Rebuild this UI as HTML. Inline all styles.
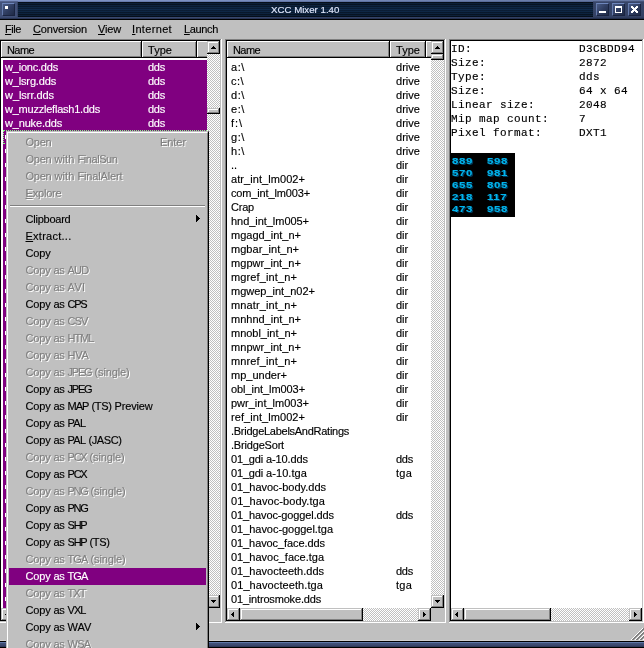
<!DOCTYPE html>
<html><head><meta charset="utf-8"><title>XCC Mixer 1.40</title>
<style>
html,body{margin:0;padding:0;background:#c0c0c0;}
body{width:644px;height:648px;overflow:hidden;position:relative;font-family:"Liberation Sans",sans-serif;font-size:11px;color:#000;-webkit-text-stroke:0.15px;}
#root{position:absolute;left:0;top:0;width:644px;height:648px;overflow:hidden;will-change:transform;}
div,span,i,b{position:absolute;box-sizing:border-box;white-space:nowrap;display:block;font-style:normal;font-weight:normal;}
u{text-decoration:underline;text-underline-offset:1px;}
.t{line-height:14px;height:14px;}
.w{color:#fff;}
.mono{font-family:"Liberation Mono",monospace;font-size:11px;letter-spacing:0.4px;}
.dis{color:#808080;text-shadow:1px 1px 0 #fff;}
.chk{background-color:#c0c0c0;background-image:repeating-conic-gradient(#fff 0% 25%, #c0c0c0 0% 50%);background-size:2px 2px;}
.btn{background:#c0c0c0;box-shadow:inset -1px -1px 0 #000,inset 1px 1px 0 #c0c0c0,inset -2px -2px 0 #808080,inset 2px 2px 0 #fff;}
.hd{background:#c0c0c0;height:17px;top:41px;box-shadow:inset -1px -1px 0 #000,inset 1px 1px 0 #fff,inset -2px -2px 0 #808080;}
.hd span{top:2px;line-height:14px;}
.pan{top:39px;height:584px;background:#fff;box-shadow:inset -1px -1px 0 #fff,inset 1px 1px 0 #808080,inset -2px -2px 0 #c0c0c0,inset 2px 2px 0 #000;}
.tb{top:3px;width:13px;height:13px;background:linear-gradient(135deg,#495b86 0%,#303e62 50%,#1f2a46 100%);border-top:1px solid #6e86bc;border-left:1px solid #647aac;border-right:1px solid #1a2440;border-bottom:1px solid #1a2440;}
.num{line-height:12px;font-size:9.5px;font-weight:bold;color:#00b4ec;letter-spacing:0.55px;text-shadow:1px 1px 0 #003a5c;transform:scaleX(1.2);transform-origin:0 0;}
.ar{background:#000;}
</style></head><body><div id="root">

<div style="left:0;top:0;width:644px;height:20px;background:linear-gradient(#7b90c2 0,#7b90c2 1px,#667bad 1px,#667bad 2px,#43537b 2px,#3f4e75 17px,#39486e 17px,#39486e 18px,#2a3656 18px,#2a3656 19px,#000 19px,#000 20px);"></div>
<div style="left:0;top:1px;width:18px;height:1px;background:#55648f;"></div><div style="left:593px;top:1px;width:51px;height:1px;background:#55648f;"></div>
<div style="left:0;top:0;width:644px;height:19px;background:linear-gradient(to right,rgba(0,8,24,0) 0,rgba(0,8,24,0) 30%,rgba(0,8,24,.2) 100%);"></div>
<div style="left:17px;top:2px;width:577px;height:15px;background:#364262;"></div>
<div style="left:18px;top:2px;width:575px;height:15px;background:linear-gradient(rgba(24,70,125,0) 0,rgba(24,70,125,.32) 50%,rgba(24,70,125,0) 100%),repeating-linear-gradient(#050d18 0,#050d18 1px,#0b1d34 1px,#0b1d34 2px);"></div>
<div class="tb" style="left:2px;"></div><div style="left:5px;top:6px;width:3px;height:3px;background:#fff;"></div>
<div class="t" style="left:271px;top:2.6px;font-size:9.7px;color:#dfe6fb;">XCC Mixer 1.40</div>
<div class="tb" style="left:596px;"></div><div style="left:599px;top:11px;width:7px;height:2px;background:#fff;"></div>
<div class="tb" style="left:612px;"></div><div style="left:615px;top:6px;width:7px;height:7px;border:1px solid #fff;border-top:2px solid #fff;"></div>
<div class="tb" style="left:628px;"></div><svg style="position:absolute;left:631px;top:6px" width="7" height="7" viewBox="0 0 7 7" shape-rendering="crispEdges"><path d="M0 0h1v1h-1zM1 0h1v1h-1zM5 0h1v1h-1zM6 0h1v1h-1zM0 1h1v1h-1zM1 1h1v1h-1zM2 1h1v1h-1zM4 1h1v1h-1zM5 1h1v1h-1zM6 1h1v1h-1zM1 2h1v1h-1zM2 2h1v1h-1zM3 2h1v1h-1zM4 2h1v1h-1zM5 2h1v1h-1zM2 3h1v1h-1zM3 3h1v1h-1zM4 3h1v1h-1zM1 4h1v1h-1zM2 4h1v1h-1zM3 4h1v1h-1zM4 4h1v1h-1zM5 4h1v1h-1zM0 5h1v1h-1zM1 5h1v1h-1zM2 5h1v1h-1zM4 5h1v1h-1zM5 5h1v1h-1zM6 5h1v1h-1zM0 6h1v1h-1zM1 6h1v1h-1zM5 6h1v1h-1zM6 6h1v1h-1z" fill="#fff"/></svg>
<div class="t" style="left:5px;top:22px;letter-spacing:-0.434px;"><u>F</u>ile</div>
<div class="t" style="left:33px;top:22px;letter-spacing:-0.164px;"><u>C</u>onversion</div>
<div class="t" style="left:98px;top:22px;letter-spacing:-0.164px;"><u>V</u>iew</div>
<div class="t" style="left:132px;top:22px;letter-spacing:0.336px;"><u>I</u>nternet</div>
<div class="t" style="left:184px;top:22px;letter-spacing:-0.349px;"><u>L</u>aunch</div>
<div class="pan" style="left:-1px;width:223px;"></div>
<div class="hd" style="left:1px;width:141px;"><span style="left:6px;letter-spacing:-0.586px;">Name</span></div>
<div class="hd" style="left:142px;width:55px;"><span style="left:6px;letter-spacing:0.035px;">Type</span></div>
<div class="hd" style="left:197px;width:12px;"></div>
<div style="left:3px;top:60px;width:204px;height:548px;background:#800080;"></div>
<div class="t w" style="left:5px;top:60px;letter-spacing:-0.205px;">w_ionc.dds</div>
<div class="t w" style="left:148px;top:60px;letter-spacing:-0.250px;">dds</div>
<div class="t w" style="left:5px;top:74px;letter-spacing:-0.158px;">w_lsrg.dds</div>
<div class="t w" style="left:148px;top:74px;letter-spacing:-0.250px;">dds</div>
<div class="t w" style="left:5px;top:88px;letter-spacing:-0.053px;">w_lsrr.dds</div>
<div class="t w" style="left:148px;top:88px;letter-spacing:-0.250px;">dds</div>
<div class="t w" style="left:5px;top:102px;letter-spacing:-0.226px;">w_muzzleflash1.dds</div>
<div class="t w" style="left:148px;top:102px;letter-spacing:-0.250px;">dds</div>
<div class="t w" style="left:5px;top:116px;letter-spacing:-0.172px;">w_nuke.dds</div>
<div class="t w" style="left:148px;top:116px;letter-spacing:-0.250px;">dds</div>
<b style="left:5px;top:135px;width:1px;height:4px;background:#fff;"></b>
<b style="left:5px;top:149px;width:1px;height:4px;background:#fff;"></b>
<b style="left:5px;top:163px;width:1px;height:4px;background:#fff;"></b>
<b style="left:5px;top:177px;width:1px;height:4px;background:#fff;"></b>
<b style="left:5px;top:191px;width:1px;height:4px;background:#fff;"></b>
<b style="left:5px;top:205px;width:1px;height:4px;background:#fff;"></b>
<b style="left:5px;top:219px;width:1px;height:4px;background:#fff;"></b>
<b style="left:5px;top:233px;width:1px;height:4px;background:#fff;"></b>
<b style="left:5px;top:247px;width:1px;height:4px;background:#fff;"></b>
<b style="left:5px;top:261px;width:1px;height:4px;background:#fff;"></b>
<b style="left:5px;top:275px;width:1px;height:4px;background:#fff;"></b>
<b style="left:5px;top:289px;width:1px;height:4px;background:#fff;"></b>
<b style="left:5px;top:303px;width:1px;height:4px;background:#fff;"></b>
<b style="left:5px;top:317px;width:1px;height:4px;background:#fff;"></b>
<b style="left:5px;top:331px;width:1px;height:4px;background:#fff;"></b>
<b style="left:5px;top:345px;width:1px;height:4px;background:#fff;"></b>
<b style="left:5px;top:359px;width:1px;height:4px;background:#fff;"></b>
<b style="left:5px;top:373px;width:1px;height:4px;background:#fff;"></b>
<b style="left:5px;top:387px;width:1px;height:4px;background:#fff;"></b>
<b style="left:5px;top:401px;width:1px;height:4px;background:#fff;"></b>
<b style="left:5px;top:415px;width:1px;height:4px;background:#fff;"></b>
<b style="left:5px;top:429px;width:1px;height:4px;background:#fff;"></b>
<b style="left:5px;top:443px;width:1px;height:4px;background:#fff;"></b>
<b style="left:5px;top:457px;width:1px;height:4px;background:#fff;"></b>
<b style="left:5px;top:471px;width:1px;height:4px;background:#fff;"></b>
<b style="left:5px;top:485px;width:1px;height:4px;background:#fff;"></b>
<b style="left:5px;top:499px;width:1px;height:4px;background:#fff;"></b>
<b style="left:5px;top:513px;width:1px;height:4px;background:#fff;"></b>
<b style="left:5px;top:527px;width:1px;height:4px;background:#fff;"></b>
<b style="left:5px;top:541px;width:1px;height:4px;background:#fff;"></b>
<b style="left:5px;top:555px;width:1px;height:4px;background:#fff;"></b>
<b style="left:5px;top:569px;width:1px;height:4px;background:#fff;"></b>
<b style="left:5px;top:583px;width:1px;height:4px;background:#fff;"></b>
<b style="left:5px;top:597px;width:1px;height:4px;background:#fff;"></b>
<div style="left:3px;top:130px;width:204px;height:14px;border:1px dotted #7fff7f;"></div>
<div class="chk" style="left:207px;top:41px;width:13px;height:567px;"></div>
<div class="btn" style="left:207px;top:41px;width:13px;height:13px;"></div>
<b class="ar" style="left:213px;top:46px;width:1px;height:1px;"></b>
<b class="ar" style="left:212px;top:47px;width:3px;height:1px;"></b>
<b class="ar" style="left:211px;top:48px;width:5px;height:1px;"></b>
<div class="btn" style="left:207px;top:108px;width:13px;height:6px;"></div>
<div class="btn" style="left:207px;top:595px;width:13px;height:13px;"></div>
<b class="ar" style="left:211px;top:600px;width:5px;height:1px;"></b>
<b class="ar" style="left:212px;top:601px;width:3px;height:1px;"></b>
<b class="ar" style="left:213px;top:602px;width:1px;height:1px;"></b>
<div class="chk" style="left:1px;top:608px;width:206px;height:13px;"></div>
<div class="btn" style="left:1px;top:608px;width:13px;height:13px;"></div>
<b class="ar" style="left:5px;top:614px;width:1px;height:1px;"></b>
<b class="ar" style="left:6px;top:613px;width:1px;height:3px;"></b>
<b class="ar" style="left:7px;top:612px;width:1px;height:5px;"></b>
<div class="btn" style="left:14px;top:608px;width:100px;height:13px;"></div>
<div class="btn" style="left:194px;top:608px;width:13px;height:13px;"></div>
<b class="ar" style="left:199px;top:612px;width:1px;height:5px;"></b>
<b class="ar" style="left:200px;top:613px;width:1px;height:3px;"></b>
<b class="ar" style="left:201px;top:614px;width:1px;height:1px;"></b>
<div style="left:207px;top:608px;width:13px;height:13px;background:#c0c0c0;"></div>
<div class="pan" style="left:225px;width:221px;"></div>
<div class="hd" style="left:227px;width:163px;"><span style="left:6px;letter-spacing:-0.586px;">Name</span></div>
<div class="hd" style="left:390px;width:36px;"><span style="left:6px;letter-spacing:0.035px;">Type</span></div>
<div class="hd" style="left:426px;width:12px;"></div>
<div class="t" style="left:231px;top:60px;letter-spacing:0.589px;">a:\</div>
<div class="t" style="left:396px;top:60px;letter-spacing:0.031px;">drive</div>
<div class="t" style="left:231px;top:74px;letter-spacing:0.458px;">c:\</div>
<div class="t" style="left:396px;top:74px;letter-spacing:0.031px;">drive</div>
<div class="t" style="left:231px;top:88px;letter-spacing:0.589px;">d:\</div>
<div class="t" style="left:396px;top:88px;letter-spacing:0.031px;">drive</div>
<div class="t" style="left:231px;top:102px;letter-spacing:0.589px;">e:\</div>
<div class="t" style="left:396px;top:102px;letter-spacing:0.031px;">drive</div>
<div class="t" style="left:231px;top:116px;letter-spacing:0.943px;">f:\</div>
<div class="t" style="left:396px;top:116px;letter-spacing:0.031px;">drive</div>
<div class="t" style="left:231px;top:130px;letter-spacing:0.589px;">g:\</div>
<div class="t" style="left:396px;top:130px;letter-spacing:0.031px;">drive</div>
<div class="t" style="left:231px;top:144px;letter-spacing:0.589px;">h:\</div>
<div class="t" style="left:396px;top:144px;letter-spacing:0.031px;">drive</div>
<div class="t" style="left:231px;top:158px;letter-spacing:-0.062px;">..</div>
<div class="t" style="left:396px;top:158px;letter-spacing:-0.078px;">dir</div>
<div class="t" style="left:231px;top:172px;letter-spacing:0.066px;">atr_int_lm002+</div>
<div class="t" style="left:396px;top:172px;letter-spacing:-0.078px;">dir</div>
<div class="t" style="left:231px;top:186px;letter-spacing:-0.145px;">com_int_lm003+</div>
<div class="t" style="left:396px;top:186px;letter-spacing:-0.078px;">dir</div>
<div class="t" style="left:231px;top:200px;letter-spacing:-0.211px;">Crap</div>
<div class="t" style="left:396px;top:200px;letter-spacing:-0.078px;">dir</div>
<div class="t" style="left:231px;top:214px;letter-spacing:-0.042px;">hnd_int_lm005+</div>
<div class="t" style="left:396px;top:214px;letter-spacing:-0.078px;">dir</div>
<div class="t" style="left:231px;top:228px;letter-spacing:-0.003px;">mgagd_int_n+</div>
<div class="t" style="left:396px;top:228px;letter-spacing:-0.078px;">dir</div>
<div class="t" style="left:231px;top:242px;letter-spacing:0.035px;">mgbar_int_n+</div>
<div class="t" style="left:396px;top:242px;letter-spacing:-0.078px;">dir</div>
<div class="t" style="left:231px;top:256px;letter-spacing:0.049px;">mgpwr_int_n+</div>
<div class="t" style="left:396px;top:256px;letter-spacing:-0.078px;">dir</div>
<div class="t" style="left:231px;top:270px;letter-spacing:0.124px;">mgref_int_n+</div>
<div class="t" style="left:396px;top:270px;letter-spacing:-0.078px;">dir</div>
<div class="t" style="left:231px;top:284px;letter-spacing:-0.007px;">mgwep_int_n02+</div>
<div class="t" style="left:396px;top:284px;letter-spacing:-0.078px;">dir</div>
<div class="t" style="left:231px;top:298px;letter-spacing:0.124px;">mnatr_int_n+</div>
<div class="t" style="left:396px;top:298px;letter-spacing:-0.078px;">dir</div>
<div class="t" style="left:231px;top:312px;letter-spacing:-0.003px;">mnhnd_int_n+</div>
<div class="t" style="left:396px;top:312px;letter-spacing:-0.078px;">dir</div>
<div class="t" style="left:231px;top:326px;letter-spacing:-0.030px;">mnobl_int_n+</div>
<div class="t" style="left:396px;top:326px;letter-spacing:-0.078px;">dir</div>
<div class="t" style="left:231px;top:340px;letter-spacing:0.049px;">mnpwr_int_n+</div>
<div class="t" style="left:396px;top:340px;letter-spacing:-0.078px;">dir</div>
<div class="t" style="left:231px;top:354px;letter-spacing:0.124px;">mnref_int_n+</div>
<div class="t" style="left:396px;top:354px;letter-spacing:-0.078px;">dir</div>
<div class="t" style="left:231px;top:368px;letter-spacing:0.003px;">mp_under+</div>
<div class="t" style="left:396px;top:368px;letter-spacing:-0.078px;">dir</div>
<div class="t" style="left:231px;top:382px;letter-spacing:-0.066px;">obl_int_lm003+</div>
<div class="t" style="left:396px;top:382px;letter-spacing:-0.078px;">dir</div>
<div class="t" style="left:231px;top:396px;letter-spacing:0.002px;">pwr_int_lm003+</div>
<div class="t" style="left:396px;top:396px;letter-spacing:-0.078px;">dir</div>
<div class="t" style="left:231px;top:410px;letter-spacing:0.066px;">ref_int_lm002+</div>
<div class="t" style="left:396px;top:410px;letter-spacing:-0.078px;">dir</div>
<div class="t" style="left:231px;top:424px;letter-spacing:-0.267px;">.BridgeLabelsAndRatings</div>
<div class="t" style="left:231px;top:438px;letter-spacing:-0.185px;">.BridgeSort</div>
<div class="t" style="left:231px;top:452px;letter-spacing:-0.174px;">01_gdi</div><div class="t" style="left:266px;top:452px;letter-spacing:-0.102px;">a-10.dds</div>
<div class="t" style="left:396px;top:452px;letter-spacing:-0.250px;">dds</div>
<div class="t" style="left:231px;top:466px;letter-spacing:-0.174px;">01_gdi</div><div class="t" style="left:266px;top:466px;letter-spacing:0.078px;">a-10.tga</div>
<div class="t" style="left:396px;top:466px;letter-spacing:0.234px;">tga</div>
<div class="t" style="left:231px;top:480px;letter-spacing:-0.012px;">01_havoc-body.dds</div>
<div class="t" style="left:231px;top:494px;letter-spacing:0.073px;">01_havoc-body.tga</div>
<div class="t" style="left:231px;top:508px;letter-spacing:-0.116px;">01_havoc-goggel.dds</div>
<div class="t" style="left:396px;top:508px;letter-spacing:-0.250px;">dds</div>
<div class="t" style="left:231px;top:522px;letter-spacing:-0.039px;">01_havoc-goggel.tga</div>
<div class="t" style="left:231px;top:536px;letter-spacing:-0.084px;">01_havoc_face.dds</div>
<div class="t" style="left:231px;top:550px;letter-spacing:0.002px;">01_havoc_face.tga</div>
<div class="t" style="left:231px;top:564px;letter-spacing:0.002px;">01_havocteeth.dds</div>
<div class="t" style="left:396px;top:564px;letter-spacing:-0.250px;">dds</div>
<div class="t" style="left:231px;top:578px;letter-spacing:0.086px;">01_havocteeth.tga</div>
<div class="t" style="left:396px;top:578px;letter-spacing:0.234px;">tga</div>
<div class="t" style="left:231px;top:592px;letter-spacing:-0.174px;">01_introsmoke.dds</div>
<div class="chk" style="left:431px;top:41px;width:13px;height:567px;"></div>
<div class="btn" style="left:431px;top:41px;width:13px;height:13px;"></div>
<b class="ar" style="left:437px;top:46px;width:1px;height:1px;"></b>
<b class="ar" style="left:436px;top:47px;width:3px;height:1px;"></b>
<b class="ar" style="left:435px;top:48px;width:5px;height:1px;"></b>
<div class="btn" style="left:431px;top:54px;width:13px;height:6px;"></div>
<div class="btn" style="left:431px;top:595px;width:13px;height:13px;"></div>
<b class="ar" style="left:435px;top:600px;width:5px;height:1px;"></b>
<b class="ar" style="left:436px;top:601px;width:3px;height:1px;"></b>
<b class="ar" style="left:437px;top:602px;width:1px;height:1px;"></b>
<div class="chk" style="left:227px;top:608px;width:204px;height:13px;"></div>
<div class="btn" style="left:227px;top:608px;width:13px;height:13px;"></div>
<b class="ar" style="left:231px;top:614px;width:1px;height:1px;"></b>
<b class="ar" style="left:232px;top:613px;width:1px;height:3px;"></b>
<b class="ar" style="left:233px;top:612px;width:1px;height:5px;"></b>
<div class="btn" style="left:240px;top:608px;width:123px;height:13px;"></div>
<div class="btn" style="left:418px;top:608px;width:13px;height:13px;"></div>
<b class="ar" style="left:423px;top:612px;width:1px;height:5px;"></b>
<b class="ar" style="left:424px;top:613px;width:1px;height:3px;"></b>
<b class="ar" style="left:425px;top:614px;width:1px;height:1px;"></b>
<div style="left:431px;top:608px;width:13px;height:13px;background:#c0c0c0;"></div>
<div class="pan" style="left:449px;width:195px;"></div>
<div class="t mono" style="left:451px;top:42px;">ID:</div><div class="t mono" style="left:579px;top:42px;">D3CBDD94</div>
<div class="t mono" style="left:451px;top:56px;">Size:</div><div class="t mono" style="left:579px;top:56px;">2872</div>
<div class="t mono" style="left:451px;top:70px;">Type:</div><div class="t mono" style="left:579px;top:70px;">dds</div>
<div class="t mono" style="left:451px;top:84px;">Size:</div><div class="t mono" style="left:579px;top:84px;">64 x 64</div>
<div class="t mono" style="left:451px;top:98px;">Linear size:</div><div class="t mono" style="left:579px;top:98px;">2048</div>
<div class="t mono" style="left:451px;top:112px;">Mip map count:</div><div class="t mono" style="left:579px;top:112px;">7</div>
<div class="t mono" style="left:451px;top:126px;">Pixel format:</div><div class="t mono" style="left:579px;top:126px;">DXT1</div>
<div style="left:451px;top:153px;width:64px;height:64px;background:#000;"></div>
<div class="num" style="left:452px;top:155px;">889</div><div class="num" style="left:487px;top:155px;">598</div>
<div class="num" style="left:452px;top:167px;">570</div><div class="num" style="left:487px;top:167px;">981</div>
<div class="num" style="left:452px;top:179px;">655</div><div class="num" style="left:487px;top:179px;">805</div>
<div class="num" style="left:452px;top:191px;">218</div><div class="num" style="left:487px;top:191px;">117</div>
<div class="num" style="left:452px;top:203px;">473</div><div class="num" style="left:487px;top:203px;">958</div>
<div class="chk" style="left:451px;top:608px;width:191px;height:13px;"></div>
<div class="btn" style="left:451px;top:608px;width:13px;height:13px;"></div>
<b class="ar" style="left:455px;top:614px;width:1px;height:1px;"></b>
<b class="ar" style="left:456px;top:613px;width:1px;height:3px;"></b>
<b class="ar" style="left:457px;top:612px;width:1px;height:5px;"></b>
<div class="btn" style="left:464px;top:608px;width:87px;height:13px;"></div>
<div class="btn" style="left:629px;top:608px;width:13px;height:13px;"></div>
<b class="ar" style="left:634px;top:612px;width:1px;height:5px;"></b>
<b class="ar" style="left:635px;top:613px;width:1px;height:3px;"></b>
<b class="ar" style="left:636px;top:614px;width:1px;height:1px;"></b>
<svg style="position:absolute;left:630px;top:627px" width="14" height="13" viewBox="0 0 14 13" shape-rendering="crispEdges"><path d="M12 1h1v1h-1zM11 2h1v1h-1zM10 3h1v1h-1zM9 4h1v1h-1zM13 4h1v1h-1zM8 5h1v1h-1zM12 5h1v1h-1zM7 6h1v1h-1zM11 6h1v1h-1zM6 7h1v1h-1zM10 7h1v1h-1zM5 8h1v1h-1zM9 8h1v1h-1zM13 8h1v1h-1zM4 9h1v1h-1zM8 9h1v1h-1zM12 9h1v1h-1zM3 10h1v1h-1zM7 10h1v1h-1zM11 10h1v1h-1zM2 11h1v1h-1zM6 11h1v1h-1zM10 11h1v1h-1zM1 12h1v1h-1zM5 12h1v1h-1zM9 12h1v1h-1zM13 12h1v1h-1z" fill="#fff"/><path d="M13 1h1v1h-1zM12 2h1v1h-1zM13 2h1v1h-1zM11 3h1v1h-1zM12 3h1v1h-1zM10 4h1v1h-1zM11 4h1v1h-1zM9 5h1v1h-1zM10 5h1v1h-1zM13 5h1v1h-1zM8 6h1v1h-1zM9 6h1v1h-1zM12 6h1v1h-1zM13 6h1v1h-1zM7 7h1v1h-1zM8 7h1v1h-1zM11 7h1v1h-1zM12 7h1v1h-1zM6 8h1v1h-1zM7 8h1v1h-1zM10 8h1v1h-1zM11 8h1v1h-1zM5 9h1v1h-1zM6 9h1v1h-1zM9 9h1v1h-1zM10 9h1v1h-1zM13 9h1v1h-1zM4 10h1v1h-1zM5 10h1v1h-1zM8 10h1v1h-1zM9 10h1v1h-1zM12 10h1v1h-1zM13 10h1v1h-1zM3 11h1v1h-1zM4 11h1v1h-1zM7 11h1v1h-1zM8 11h1v1h-1zM11 11h1v1h-1zM12 11h1v1h-1zM2 12h1v1h-1zM3 12h1v1h-1zM6 12h1v1h-1zM7 12h1v1h-1zM10 12h1v1h-1zM11 12h1v1h-1z" fill="#808080"/></svg>
<div style="left:0;top:640px;width:644px;height:8px;background:linear-gradient(#d0d0d0 0,#d0d0d0 1px,#000 1px,#000 2px,#5f78a8 2px,#5f78a8 3px,#42527a 3px,#3c4a70 5px,#2a3452 7px,#000 7px,#000 8px);"></div>
<div style="left:6px;top:131px;width:203px;height:520px;background:#c0c0c0;border-top:1px solid #c0c0c0;border-left:1px solid #c0c0c0;border-right:1px solid #000;"></div>
<div style="left:7px;top:132px;width:201px;height:519px;border-top:1px solid #fff;border-left:1px solid #fff;border-right:1px solid #808080;"></div>
<div class="t dis" style="left:25.5px;top:135px;letter-spacing:-0.230px;">Open</div>
<div class="t dis" style="left:160px;top:135px;letter-spacing:-0.059px;">Enter</div>
<div class="t dis" style="left:25.5px;top:152px;letter-spacing:-0.230px;">Open</div><div class="t dis" style="left:54.5px;top:152px;letter-spacing:0.109px;">with</div><div class="t dis" style="left:77.5px;top:152px;letter-spacing:-0.428px;">FinalSun</div>
<div class="t dis" style="left:25.5px;top:169px;letter-spacing:-0.230px;">Open</div><div class="t dis" style="left:54.5px;top:169px;letter-spacing:0.109px;">with</div><div class="t dis" style="left:77.5px;top:169px;letter-spacing:-0.147px;">FinalAlert</div>
<div class="t dis" style="left:25.5px;top:186px;letter-spacing:-0.185px;"><u>E</u>xplore</div>
<div style="left:10px;top:205px;width:195px;height:2px;border-top:1px solid #808080;border-bottom:1px solid #fff;"></div>
<div class="t" style="left:25.5px;top:212px;letter-spacing:-0.233px;">Clipboard</div>
<b class="ar" style="left:196px;top:215px;width:1px;height:7px;"></b>
<b class="ar" style="left:197px;top:216px;width:1px;height:5px;"></b>
<b class="ar" style="left:198px;top:217px;width:1px;height:3px;"></b>
<b class="ar" style="left:199px;top:218px;width:1px;height:1px;"></b>
<div class="t" style="left:25.5px;top:229px;letter-spacing:0.259px;"><u>E</u>xtract...</div>
<div class="t" style="left:25.5px;top:246px;letter-spacing:-0.172px;">Copy</div>
<div class="t dis" style="left:25.5px;top:263px;letter-spacing:-0.172px;">Copy</div><div class="t dis" style="left:53.5px;top:263px;letter-spacing:-0.312px;">as</div><div class="t dis" style="left:67.5px;top:263px;letter-spacing:-0.745px;">AUD</div>
<div class="t dis" style="left:25.5px;top:280px;letter-spacing:-0.172px;">Copy</div><div class="t dis" style="left:53.5px;top:280px;letter-spacing:-0.312px;">as</div><div class="t dis" style="left:67.5px;top:280px;letter-spacing:0.359px;">AVI</div>
<div class="t" style="left:25.5px;top:297px;letter-spacing:-0.172px;">Copy</div><div class="t" style="left:53.5px;top:297px;letter-spacing:-0.312px;">as</div><div class="t" style="left:67.5px;top:297px;letter-spacing:-1.208px;">CPS</div>
<div class="t dis" style="left:25.5px;top:314px;letter-spacing:-0.172px;">Copy</div><div class="t dis" style="left:53.5px;top:314px;letter-spacing:-0.312px;">as</div><div class="t dis" style="left:67.5px;top:314px;letter-spacing:-0.875px;">CSV</div>
<div class="t dis" style="left:25.5px;top:331px;letter-spacing:-0.172px;">Copy</div><div class="t dis" style="left:53.5px;top:331px;letter-spacing:-0.312px;">as</div><div class="t dis" style="left:67.5px;top:331px;letter-spacing:-0.988px;">HTML</div>
<div class="t dis" style="left:25.5px;top:348px;letter-spacing:-0.172px;">Copy</div><div class="t dis" style="left:53.5px;top:348px;letter-spacing:-0.312px;">as</div><div class="t dis" style="left:67.5px;top:348px;letter-spacing:-0.271px;">HVA</div>
<div class="t dis" style="left:25.5px;top:365px;letter-spacing:-0.172px;">Copy</div><div class="t dis" style="left:53.5px;top:365px;letter-spacing:-0.312px;">as</div><div class="t dis" style="left:67.5px;top:365px;letter-spacing:-1.184px;">JPEG</div><div class="t dis" style="left:94.5px;top:365px;letter-spacing:-0.135px;">(single)</div>
<div class="t" style="left:25.5px;top:382px;letter-spacing:-0.172px;">Copy</div><div class="t" style="left:53.5px;top:382px;letter-spacing:-0.312px;">as</div><div class="t" style="left:67.5px;top:382px;letter-spacing:-1.184px;">JPEG</div>
<div class="t" style="left:25.5px;top:399px;letter-spacing:-0.172px;">Copy</div><div class="t" style="left:53.5px;top:399px;letter-spacing:-0.312px;">as</div><div class="t" style="left:67.5px;top:399px;letter-spacing:-0.948px;">MAP</div><div class="t" style="left:91.5px;top:399px;letter-spacing:-0.348px;">(TS)</div><div class="t" style="left:114.5px;top:399px;letter-spacing:-0.161px;">Preview</div>
<div class="t" style="left:25.5px;top:416px;letter-spacing:-0.172px;">Copy</div><div class="t" style="left:53.5px;top:416px;letter-spacing:-0.312px;">as</div><div class="t" style="left:67.5px;top:416px;letter-spacing:-0.661px;">PAL</div>
<div class="t" style="left:25.5px;top:433px;letter-spacing:-0.172px;">Copy</div><div class="t" style="left:53.5px;top:433px;letter-spacing:-0.312px;">as</div><div class="t" style="left:67.5px;top:433px;letter-spacing:-0.661px;">PAL</div><div class="t" style="left:88.5px;top:433px;letter-spacing:-0.409px;">(JASC)</div>
<div class="t dis" style="left:25.5px;top:450px;letter-spacing:-0.172px;">Copy</div><div class="t dis" style="left:53.5px;top:450px;letter-spacing:-0.312px;">as</div><div class="t dis" style="left:67.5px;top:450px;letter-spacing:-1.208px;">PCX</div><div class="t dis" style="left:89.5px;top:450px;letter-spacing:-0.135px;">(single)</div>
<div class="t" style="left:25.5px;top:467px;letter-spacing:-0.172px;">Copy</div><div class="t" style="left:53.5px;top:467px;letter-spacing:-0.312px;">as</div><div class="t" style="left:67.5px;top:467px;letter-spacing:-1.208px;">PCX</div>
<div class="t dis" style="left:25.5px;top:484px;letter-spacing:-0.172px;">Copy</div><div class="t dis" style="left:53.5px;top:484px;letter-spacing:-0.312px;">as</div><div class="t dis" style="left:67.5px;top:484px;letter-spacing:-1.281px;">PNG</div><div class="t dis" style="left:90.5px;top:484px;letter-spacing:-0.135px;">(single)</div>
<div class="t" style="left:25.5px;top:501px;letter-spacing:-0.172px;">Copy</div><div class="t" style="left:53.5px;top:501px;letter-spacing:-0.312px;">as</div><div class="t" style="left:67.5px;top:501px;letter-spacing:-1.281px;">PNG</div>
<div class="t" style="left:25.5px;top:518px;letter-spacing:-0.172px;">Copy</div><div class="t" style="left:53.5px;top:518px;letter-spacing:-0.312px;">as</div><div class="t" style="left:67.5px;top:518px;letter-spacing:-1.208px;">SHP</div>
<div class="t" style="left:25.5px;top:535px;letter-spacing:-0.172px;">Copy</div><div class="t" style="left:53.5px;top:535px;letter-spacing:-0.312px;">as</div><div class="t" style="left:67.5px;top:535px;letter-spacing:-1.208px;">SHP</div><div class="t" style="left:89.5px;top:535px;letter-spacing:-0.348px;">(TS)</div>
<div class="t dis" style="left:25.5px;top:552px;letter-spacing:-0.172px;">Copy</div><div class="t dis" style="left:53.5px;top:552px;letter-spacing:-0.312px;">as</div><div class="t dis" style="left:67.5px;top:552px;letter-spacing:-0.875px;">TGA</div><div class="t dis" style="left:90.5px;top:552px;letter-spacing:-0.135px;">(single)</div>
<div style="left:9px;top:568px;width:197px;height:17px;background:#800080;"></div>
<div class="t w" style="left:25.5px;top:569px;letter-spacing:-0.172px;">Copy</div><div class="t w" style="left:53.5px;top:569px;letter-spacing:-0.312px;">as</div><div class="t w" style="left:67.5px;top:569px;letter-spacing:-0.875px;">TGA</div>
<div class="t dis" style="left:25.5px;top:586px;letter-spacing:-0.172px;">Copy</div><div class="t dis" style="left:53.5px;top:586px;letter-spacing:-0.312px;">as</div><div class="t dis" style="left:67.5px;top:586px;letter-spacing:-0.927px;">TXT</div>
<div class="t" style="left:25.5px;top:603px;letter-spacing:-0.172px;">Copy</div><div class="t" style="left:53.5px;top:603px;letter-spacing:-0.312px;">as</div><div class="t" style="left:67.5px;top:603px;letter-spacing:-0.932px;">VXL</div>
<div class="t" style="left:25.5px;top:620px;letter-spacing:-0.172px;">Copy</div><div class="t" style="left:53.5px;top:620px;letter-spacing:-0.312px;">as</div><div class="t" style="left:67.5px;top:620px;letter-spacing:0.052px;">WAV</div>
<b class="ar" style="left:196px;top:623px;width:1px;height:7px;"></b>
<b class="ar" style="left:197px;top:624px;width:1px;height:5px;"></b>
<b class="ar" style="left:198px;top:625px;width:1px;height:3px;"></b>
<b class="ar" style="left:199px;top:626px;width:1px;height:1px;"></b>
<div class="t dis" style="left:25.5px;top:637px;letter-spacing:-0.172px;">Copy</div><div class="t dis" style="left:53.5px;top:637px;letter-spacing:-0.312px;">as</div><div class="t dis" style="left:67.5px;top:637px;letter-spacing:-0.688px;">WSA</div>
</div></body></html>
